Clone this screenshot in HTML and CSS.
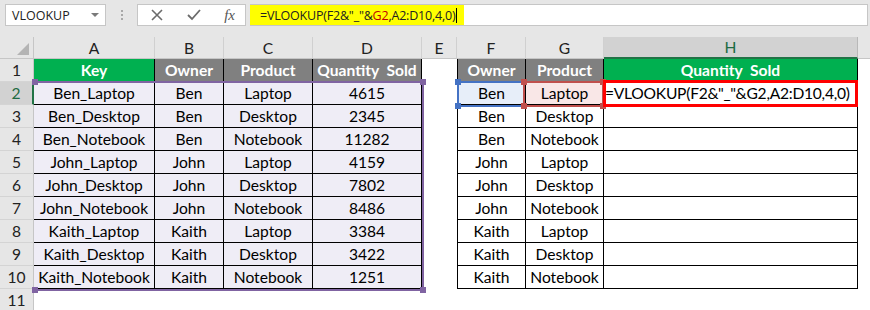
FILE: index.html
```html
<!DOCTYPE html>
<html lang="en">
<head>
    <meta charset="UTF-8">
    <title>VLOOKUP</title>
    <link rel="stylesheet" href="styles.css">
</head>
<body>
    <div class="ribbon">
        <div class="namebox"><span>VLOOKUP</span><span class="caret"></span></div>
        <div class="grip"><i></i><i></i><i></i></div>
        <div class="fxbtns">
            <svg width="14" height="14" viewBox="0 0 14 14"><path d="M2 2 L12 12 M12 2 L2 12" stroke="#6b6b6b" stroke-width="1.6" fill="none"/></svg>
            <svg width="16" height="14" viewBox="0 0 16 14"><path d="M2 7 L6 11 L14 2" stroke="#6b6b6b" stroke-width="1.8" fill="none"/></svg>
            <span class="fx">fx</span>
        </div>
        <div class="fbar"><span class="hl">=VLOOKUP(F2&amp;"_"&amp;<span class="ref">G2</span>,A2:D10,4,0)<span class="cursor"></span></span></div>
    </div>

    <div class="sheet">
        <div class="corner"></div>
        <div class="ch">A</div><div class="ch">B</div><div class="ch">C</div><div class="ch">D</div><div class="ch">E</div>
        <div class="ch">F</div><div class="ch">G</div><div class="ch on">H</div><div class="ch last"></div>

        <div class="rh">1</div>
        <div class="c hg">Key</div><div class="c hd">Owner</div><div class="c hd">Product</div><div class="c hd">Quantity&nbsp; Sold</div>
        <div class="e"></div>
        <div class="c hd bl">Owner</div><div class="c hd">Product</div><div class="c hg">Quantity&nbsp; Sold</div><div class="e"></div>

        <div class="rh on">2</div>
        <div class="c s">Ben_Laptop</div><div class="c s">Ben</div><div class="c s">Laptop</div><div class="c s">4615</div>
        <div class="e"></div>
        <div class="c bl f2">Ben</div><div class="c g2">Laptop</div><div class="c formula">=VLOOKUP(F2&amp;"_"&amp;G2,A2:D10,4,0)</div><div class="e"></div>

        <div class="rh">3</div>
        <div class="c s">Ben_Desktop</div><div class="c s">Ben</div><div class="c s">Desktop</div><div class="c s">2345</div>
        <div class="e"></div>
        <div class="c bl">Ben</div><div class="c">Desktop</div><div class="c"></div><div class="e"></div>

        <div class="rh">4</div>
        <div class="c s">Ben_Notebook</div><div class="c s">Ben</div><div class="c s">Notebook</div><div class="c s">11282</div>
        <div class="e"></div>
        <div class="c bl">Ben</div><div class="c">Notebook</div><div class="c"></div><div class="e"></div>

        <div class="rh">5</div>
        <div class="c s">John_Laptop</div><div class="c s">John</div><div class="c s">Laptop</div><div class="c s">4159</div>
        <div class="e"></div>
        <div class="c bl">John</div><div class="c">Laptop</div><div class="c"></div><div class="e"></div>

        <div class="rh">6</div>
        <div class="c s">John_Desktop</div><div class="c s">John</div><div class="c s">Desktop</div><div class="c s">7802</div>
        <div class="e"></div>
        <div class="c bl">John</div><div class="c">Desktop</div><div class="c"></div><div class="e"></div>

        <div class="rh">7</div>
        <div class="c s">John_Notebook</div><div class="c s">John</div><div class="c s">Notebook</div><div class="c s">8486</div>
        <div class="e"></div>
        <div class="c bl">John</div><div class="c">Notebook</div><div class="c"></div><div class="e"></div>

        <div class="rh">8</div>
        <div class="c s">Kaith_Laptop</div><div class="c s">Kaith</div><div class="c s">Laptop</div><div class="c s">3384</div>
        <div class="e"></div>
        <div class="c bl">Kaith</div><div class="c">Laptop</div><div class="c"></div><div class="e"></div>

        <div class="rh">9</div>
        <div class="c s">Kaith_Desktop</div><div class="c s">Kaith</div><div class="c s">Desktop</div><div class="c s">3422</div>
        <div class="e"></div>
        <div class="c bl">Kaith</div><div class="c">Desktop</div><div class="c"></div><div class="e"></div>

        <div class="rh">10</div>
        <div class="c s">Kaith_Notebook</div><div class="c s">Kaith</div><div class="c s">Notebook</div><div class="c s">1251</div>
        <div class="e"></div>
        <div class="c bl">Kaith</div><div class="c">Notebook</div><div class="c"></div><div class="e"></div>

        <div class="rh">11</div>

        <!-- selection outlines drawn over the cells -->
        <div class="pick purple"><i class="tl"></i><i class="tr"></i><i class="bl-h"></i><i class="br"></i></div>
        <div class="pick blue"><i class="tl"></i><i class="tr"></i><i class="bl-h"></i><i class="br"></i></div>
        <div class="pick red"><i class="tl"></i><i class="tr"></i><i class="bl-h"></i><i class="br"></i></div>
        <div class="active"></div>
    </div>
</body>
</html>
```

FILE: styles.css
```css
body {
    margin: 0;
    background-color: #fff;
    font-family: Lato, 'Liberation Sans', sans-serif;
    overflow: hidden;
}

/* formula bar */
.ribbon {
    height: 37px;
    box-sizing: border-box;
    background-color: #e6e6e6;
    display: flex;
    align-items: flex-start;
    padding: 4px 2px 0 5px;
}

.namebox {
    width: 101px;
    height: 22px;
    box-sizing: border-box;
    background-color: #fff;
    border: 1px solid #c6c6c6;
    display: flex;
    align-items: center;
    justify-content: space-between;
    padding: 0 6px 0 6px;
    font-family: 'Open Sans', sans-serif;
    font-size: 12.5px;
    color: #222;
}

.caret {
    width: 0;
    height: 0;
    border-left: 4px solid transparent;
    border-right: 4px solid transparent;
    border-top: 4px solid #7a7a7a;
}

.grip {
    margin: 6px 0 0 15px;
    display: flex;
    flex-direction: column;
    gap: 2px;
}

.grip i {
    width: 2px;
    height: 2px;
    background-color: #a8a8a8;
}

.fxbtns {
    margin-left: 14px;
    width: 109px;
    height: 22px;
    box-sizing: border-box;
    background-color: #fff;
    border: 1px solid #c6c6c6;
    display: flex;
    align-items: center;
    justify-content: space-between;
    padding: 0 10px 0 12px;
}

.fx {
    font-family: 'Liberation Serif', serif;
    font-style: italic;
    font-size: 15px;
    color: #555;
}

.fbar {
    margin-left: 4px;
    flex: 1;
    height: 22px;
    box-sizing: border-box;
    background-color: #fff;
    border: 1px solid #c6c6c6;
    border-left: none;
    display: flex;
}

.hl {
    background-color: #ffff00;
    padding: 0 0 0 10px;
    width: 204px;
    display: flex;
    align-items: center;
    font-family: 'Open Sans', sans-serif;
    font-size: 12.5px;
    color: #222;
    letter-spacing: -0.2px;
}

.ref {
    color: #c00000;
}

.cursor {
    width: 1px;
    height: 15px;
    background-color: #000;
    margin-left: 1px;
}

/* sheet grid */
.sheet {
    position: relative;
    display: grid;
    grid-template-columns: 34px 121px 69px 89px 109px 35px 69px 78px 254px 1fr;
    grid-template-rows: 22px repeat(11, 23px);
    font-size: 15.6px;
    color: #000;
}

.corner {
    background-color: #e6e6e6;
    border-right: 1px solid #c6c6c6;
    border-bottom: 1px solid #c6c6c6;
    position: relative;
}

.corner::after {
    content: '';
    position: absolute;
    right: 4px;
    bottom: 3px;
    width: 12px;
    height: 12px;
    background-color: #b4b4b4;
    clip-path: polygon(100% 0, 100% 100%, 0 100%);
}

.ch {
    background-color: #e6e6e6;
    border-right: 1px solid #d0d0d0;
    border-bottom: 1px solid #c6c6c6;
    display: flex;
    align-items: center;
    justify-content: center;
    color: #222;
}

.ch.on {
    background-color: #d2d2d2;
    color: #1e6b42;
    border-bottom: 2px solid #217346;
    border-right-color: #b8b8b8;
}

.ch.last {
    border-right: none;
}

.rh {
    grid-column: 1;
    background-color: #e6e6e6;
    border-right: 1px solid #c6c6c6;
    border-bottom: 1px solid #d4d4d4;
    display: flex;
    align-items: center;
    justify-content: center;
    color: #222;
}

.rh.on {
    background-color: #d2d2d2;
    color: #1e6b42;
    border-right: 2px solid #217346;
}

.c {
    border-right: 1px solid #000;
    border-bottom: 1px solid #000;
    display: flex;
    align-items: center;
    justify-content: center;
    white-space: nowrap;
}

.bl {
    border-left: 1px solid #000;
}

.hg {
    background-color: #00b050;
    color: #fff;
    font-weight: bold;
}

.hd {
    background-color: #808080;
    color: #fff;
    font-weight: bold;
}

.s {
    background-color: #efedf6;
}

.f2 {
    background-color: #e7eef9;
}

.g2 {
    background-color: #f9e7e7;
}

.formula {
    justify-content: flex-start;
    padding-left: 1px;
    letter-spacing: -0.25px;
}

/* selections */
.pick {
    position: absolute;
    box-sizing: border-box;
    border: 2px solid;
}

.pick i {
    position: absolute;
    width: 6px;
    height: 6px;
}

.pick .tl { left: -4px; top: -4px; }
.pick .tr { right: -4px; top: -4px; }
.pick .bl-h { left: -4px; bottom: -4px; }
.pick .br { right: -4px; bottom: -4px; }

.purple {
    left: 34px;
    top: 44px;
    width: 390px;
    height: 210px;
    border-color: #8064a2;
    border-left-color: transparent;
}

.purple i { background-color: #8064a2; }

.blue {
    left: 457px;
    top: 44px;
    width: 68px;
    height: 26px;
    border-color: #4472c4;
}

.blue i { background-color: #4472c4; }

.red {
    left: 523px;
    top: 44px;
    width: 81px;
    height: 26px;
    border-color: #c0504d;
}

.red i { background-color: #c0504d; }

.active {
    position: absolute;
    left: 603px;
    top: 43px;
    width: 255px;
    height: 27px;
    box-sizing: border-box;
    border: 3px solid #ff0000;
}
```
